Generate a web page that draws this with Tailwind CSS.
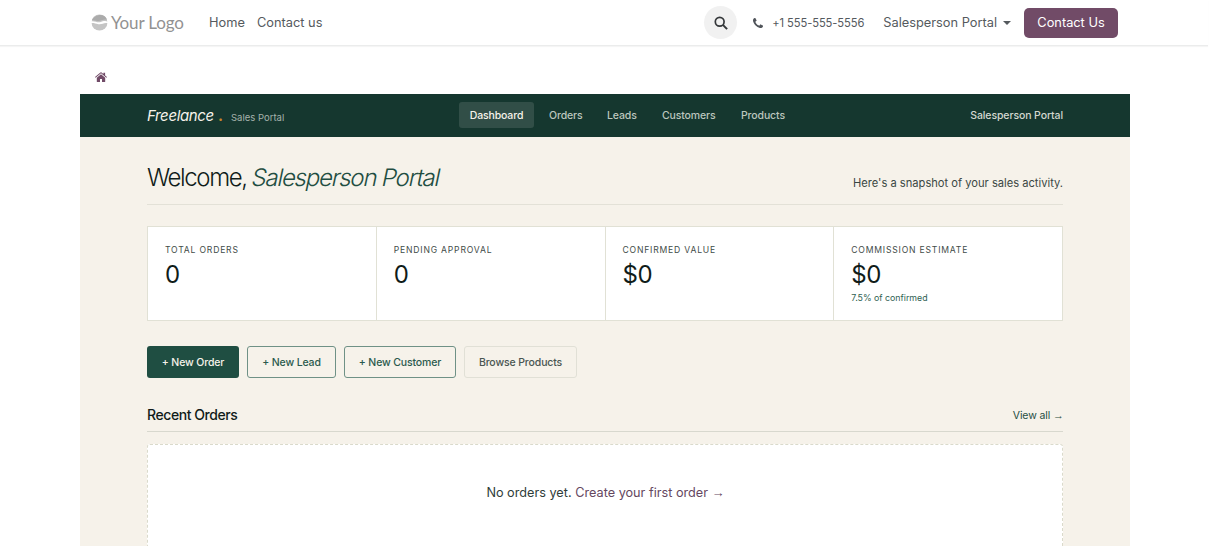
<!DOCTYPE html>
<html lang="en">
<head>
<meta charset="utf-8">
<title>Salesperson Portal</title>
<script src="https://cdn.jsdelivr.net/npm/@tailwindcss/browser@4"></script>
</head>
<body class="h-[546px] overflow-hidden bg-white font-['Inter',sans-serif] text-[12.8px] text-[#374151]">
<header class="flex h-[46px] w-[1208px] items-center border-b border-[#ebecec] pl-[91px] whitespace-nowrap text-[#555a5e] shadow-[0_1px_1px_#f5f5f5]">
  <a class="flex w-[118px] items-center gap-[3px]">
    <svg class="h-[17px] w-[17px]" viewBox="0 0 17 17">
      <circle cx="8.5" cy="8.5" r="8" fill="#c5c5c5"/>
      <path d="M1 6C3 1 13-2 16 5.5 12 5 10 7 7 7 4 7 3 6 1 6Z" fill="#ababab"/>
      <path d="M0 7.3C4 6.6 6 9 9 8.2 12 7.3 14 6.4 17 7.7V9.3C13 8.2 11 10.8 7.5 10.2 4 9.4 3 8.6 0 9Z" fill="#fff"/>
    </svg>
    <span class="font-['Lato',sans-serif] text-[17px] tracking-[-0.15px] text-[#929292]">Your Logo</span>
  </a>
  <nav class="flex pt-px">
    <a class="w-[48px]">Home</a>
    <a>Contact us</a>
  </nav>
  <div class="ml-auto flex items-center">
    <span class="flex h-[33px] w-[33px] items-center justify-center rounded-full bg-[#f1f1f1]">
      <svg class="h-[14px] w-[14px]" viewBox="0 0 14 14" fill="none" stroke="#34373a" stroke-width="1.7"><circle cx="5.7" cy="5.7" r="4.4"/><path d="m8.9 8.9 4.2 4.2" stroke-width="2"/></svg>
    </span>
    <svg class="ml-[16px] h-[10px] w-[10px]" viewBox="0 0 1408 1408" fill="#50545a"><path d="M1408 1112q0 27-10 70.500t-21 68.500q-21 50-122 106-94 51-186 51-27 0-53-3.500t-57.500-12.500-47-14.500-55.500-20.500-49-18q-98-35-175-83-127-79-264-216T152 776q-48-77-83-175-3-9-18-49t-20.500-55.500T16 449.500 3.500 392 0 339q0-92 51-186Q107 52 157 31q25-11 68.500-21T296 0q14 0 21 3 18 6 53 76 11 19 30 54t35 63.500 31 53.500q3 4 17.500 25t21.500 35.500 7 28.500q0 20-28.500 50t-62 55-62 53-28.500 46q0 9 5 22.500t8.500 20.500 14 24 11.500 19q76 137 174 235t235 174q2 1 19 11.500t24 14 20.500 8.500 22.500 5q18 0 46-28.500t53-62 55-62 50-28.500q14 0 28.500 7t35.500 21.500 25 17.500q25 15 53.500 31t63.500 35 54 30q70 35 76 53 3 7 3 21z"/></svg>
    <span class="ml-[9px] w-[111px] pt-[2px] text-[11.2px] tracking-[-0.1px]">+1 555-555-5556</span>
    <span class="pt-px">Salesperson Portal</span>
    <span class="ml-[6px] h-0 w-0 border-x-4 border-t-4 border-x-transparent border-t-[#555a5e]"></span>
    <a class="mr-[90px] ml-[13px] flex h-[30px] w-[94px] items-center justify-center rounded-[5px] bg-[#714b67] text-white">Contact Us</a>
  </div>
</header>
<div class="flex h-[47.500px] items-end pb-[11.500px] pl-[95px]">
  <svg class="h-[10px] w-[12px]" viewBox="0 0 12 10" fill="#714b67"><path d="M6 2.300 1.800 5.700V9.500Q1.800 10 2.300 10H5V7H7V10H9.700Q10.200 10 10.200 9.500V5.700Z"/><path d="M0 5.100 5.400.5Q6 0 6.600.5L8.400 2V.7H10.100V3.400L12 5.100 11.400 5.800 6 1.300.6 5.800Z"/></svg>
</div>
<main class="ml-[80px] h-[453px] w-[1050px] overflow-hidden bg-[#f6f2ea] whitespace-nowrap">
  <div class="flex h-[43.500px] items-center bg-[#15372f] px-[67px]">
    <div class="flex w-[312px] items-baseline pt-[2px]">
      <span class="w-[67px] text-[15px] tracking-[-0.35px] italic text-[#f6f2ea]">Freelance</span>
      <span class="ml-[4px] text-[15px] font-bold text-[#c8862a]">.</span>
      <span class="ml-[8px] text-[9.500px] text-[#a6b3ac]">Sales Portal</span>
    </div>
    <nav class="flex h-[26px] items-center text-[10.500px] font-medium tracking-[-0.13px] text-[#bcc6be]">
      <a class="mr-[15px] flex h-[26px] w-[75px] items-center justify-center rounded-[3px] bg-[#314e47] pt-[2px] text-[#f6f2ea]">Dashboard</a>
      <a class="w-[58px] pt-[2px]">Orders</a>
      <a class="w-[55px] pt-[2px]">Leads</a>
      <a class="w-[79px] pt-[2px]">Customers</a>
      <a class="pt-[2px]">Products</a>
    </nav>
    <span class="ml-auto pt-[2px] text-[10.500px] font-medium tracking-[-0.1px] text-[#d3d7cf]">Salesperson Portal</span>
  </div>
  <div class="mx-[67px]">
    <div class="flex h-[68px] items-end justify-between border-b border-[#e3e1d7]">
      <h1 class="flex pb-[8px] text-[24px] font-light text-[#101c19]"><span class="w-[105px] tracking-[-1.4px]">Welcome,</span><span class="inline-block -skew-x-12 tracking-[-1.2px] text-[#1f4e42]">Salesperson Portal</span></h1>
      <p class="pb-[12px] text-[11.150px] text-[#3a4743]">Here's a snapshot of your sales activity.</p>
    </div>
    <div class="mt-[21px] grid h-[95px] grid-cols-4 gap-px border border-[#e1e1d5] bg-[#e1e1d5] text-[#101c19]">
      <div class="bg-white pt-[17px] pl-[17px]"><div class="text-[8.600px] leading-[12px] tracking-[0.8px] text-[#3f4c48]">TOTAL ORDERS</div><div class="mt-[5px] text-[24px] leading-[28px] tracking-[-0.4px]">0</div></div>
      <div class="bg-white pt-[17px] pl-[17px]"><div class="text-[8.600px] leading-[12px] tracking-[0.8px] text-[#3f4c48]">PENDING APPROVAL</div><div class="mt-[5px] text-[24px] leading-[28px] tracking-[-0.4px]">0</div></div>
      <div class="bg-white pt-[17px] pl-[17px]"><div class="text-[8.600px] leading-[12px] tracking-[0.8px] text-[#3f4c48]">CONFIRMED VALUE</div><div class="mt-[5px] text-[24px] leading-[28px] tracking-[-0.4px]">$0</div></div>
      <div class="bg-white pt-[17px] pl-[17px]"><div class="text-[8.600px] leading-[12px] tracking-[0.8px] text-[#3f4c48]">COMMISSION ESTIMATE</div><div class="mt-[5px] text-[24px] leading-[28px] tracking-[-0.4px]">$0</div><div class="mt-[3px] text-[8.800px] leading-[12px] text-[#2f5f53]">7.5% of confirmed</div></div>
    </div>
    <div class="mt-[25px] flex h-[32px] gap-[8px] text-[10.500px] font-medium tracking-[-0.13px] text-[#2b5a4e]">
      <a class="flex w-[92px] items-center justify-center rounded-[3px] bg-[#1f4e42] pt-px text-[#f6f2ea]">+ New Order</a>
      <a class="flex w-[89px] items-center justify-center rounded-[3px] border border-[#6f9186] pt-px">+ New Lead</a>
      <a class="flex w-[112px] items-center justify-center rounded-[3px] border border-[#6f9186] pt-px">+ New Customer</a>
      <a class="flex w-[113px] items-center justify-center rounded-[3px] border border-[#e1e0d6] pt-px text-[#4a5652]">Browse Products</a>
    </div>
    <div class="flex h-[54px] items-end justify-between border-b border-[#d8d8ce]">
      <h2 class="pb-[6px] text-[14px] font-medium tracking-[-0.43px] text-[#101c19]">Recent Orders</h2>
      <a class="-mr-px pb-[8px] text-[10.500px] leading-[15px] tracking-[-0.1px] text-[#1f4e42]">View all <span class="font-['Liberation_Sans',sans-serif] text-[11px] leading-none">→</span></a>
    </div>
    <div class="mt-[12px] flex h-[140px] justify-center rounded-[3px] border border-dashed border-[#dadacb] bg-white pt-[38px] pl-px text-[12.700px] leading-[19px] text-[#2f3d39]">
      <p>No orders yet. <a class="text-[#65485f]">Create your first order <span class="font-['Liberation_Sans',sans-serif] text-[13px] leading-none">→</span></a></p>
    </div>
  </div>
</main>
</body>
</html>
